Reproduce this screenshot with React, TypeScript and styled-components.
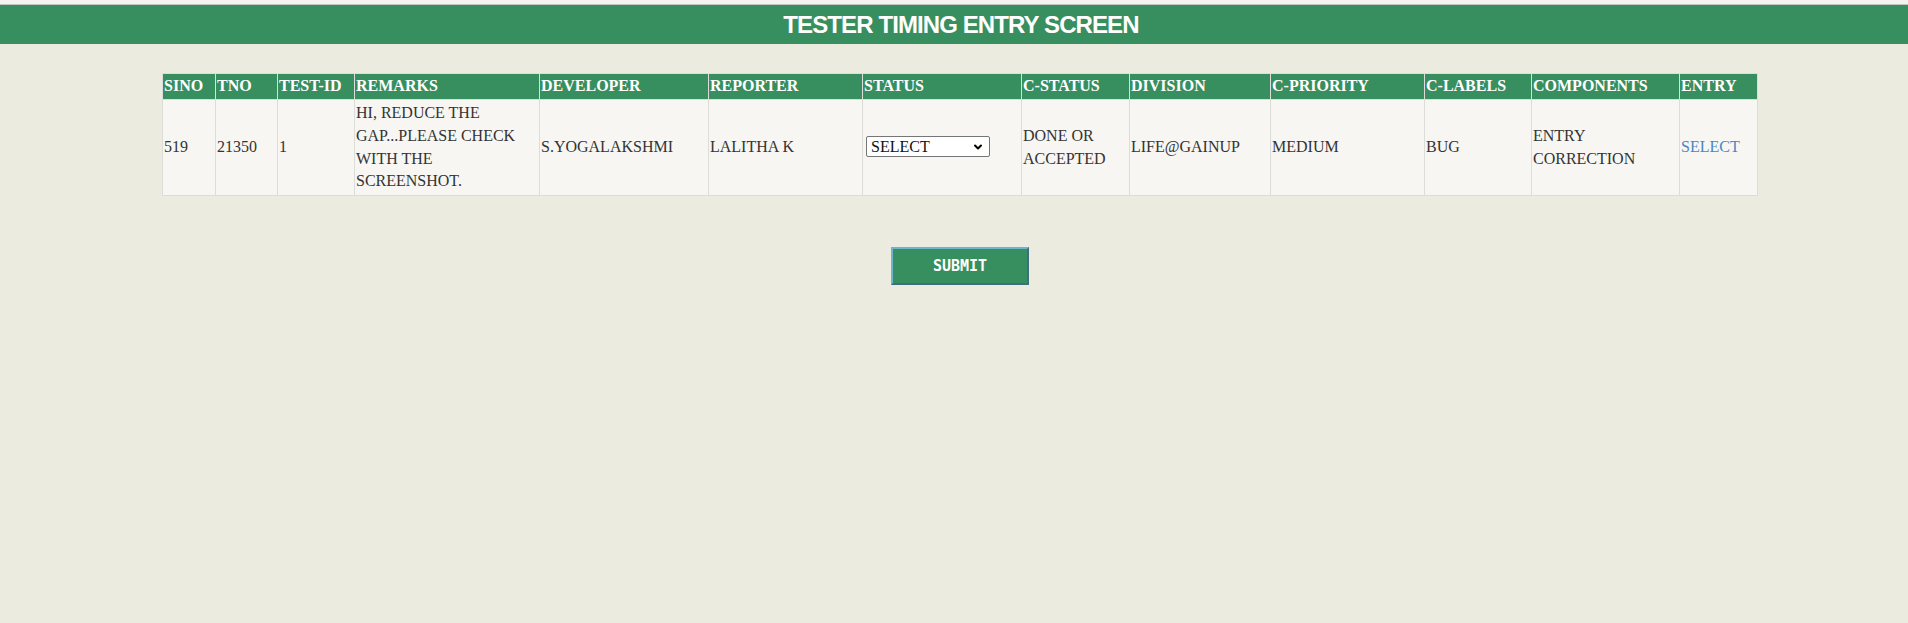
import React from 'react';
import styled, {createGlobalStyle} from 'styled-components';
import {ChevronDown} from 'lucide-react';

const GlobalStyle = createGlobalStyle`
  html,
  body {
    margin: 0;
    padding: 0;
    background: #ebebdf;
  }

  body {
    font-family: 'Liberation Serif', 'Times New Roman', serif;
    color: #333;
  }
`;

const TopEdge = styled.div`
  height: 4px;
  background: #f3f3f0;
  border-bottom: 1px solid #c4c4c4;
`;

const TitleBar = styled.div`
  display: flex;
  justify-content: center;
  align-items: center;
  height: 39px;
  padding-left: 14px;
  background: #378e5e;
`;

const Title = styled.h1`
  margin: 0;
  font-family: 'Liberation Sans', Arial, sans-serif;
  font-size: 24px;
  font-weight: bold;
  letter-spacing: -0.9px;
  color: #fff;
`;

const Content = styled.div`
  display: flex;
  flex-direction: column;
  align-items: center;
  padding: 29px 0 0 12px;
`;

const Table = styled.table`
  width: 1595px;
  table-layout: fixed;
  border-collapse: collapse;
  border: 1px solid #dcdcd8;
`;

const HeadCell = styled.th`
  padding: 1px 1px 2px;
  background: #378e5e;
  border: 1px solid #dcdcd8;
  color: #fff;
  font-size: 16px;
  font-weight: bold;
  line-height: 22px;
  text-align: left;
  white-space: nowrap;
`;

const Cell = styled.td`
  padding: 1px 1px;
  background: #f7f6f2;
  border: 1px solid #dcdcd8;
  font-size: 16px;
  line-height: 22.7px;
  vertical-align: middle;
  color: #333;
`;

const SelectBox = styled.div`
  position: relative;
  display: inline-flex;
  margin-left: 2px;

  svg {
    position: absolute;
    top: 5px;
    right: 6px;
    pointer-events: none;
    color: #000;
  }
`;

const StatusSelect = styled.select`
  appearance: none;
  width: 124px;
  height: 21px;
  padding: 0 20px 0 4px;
  font-family: 'Liberation Serif', 'Times New Roman', serif;
  font-size: 16px;
  color: #111;
  background: #fff;
  border: 1px solid #767676;
  border-radius: 2px;
`;

const EntryLink = styled.a`
  color: #4a86c2;
  text-decoration: none;
  cursor: pointer;
`;

const SubmitButton = styled.button`
  width: 138px;
  height: 38px;
  margin-top: 51px;
  background: #378e5e;
  border-style: solid;
  border-width: 2px;
  border-color: #6db4cc #3e6f7e #3e6f7e #6db4cc;
  color: #fff;
  font-family: 'DejaVu Sans Mono', monospace;
  font-size: 15px;
  font-weight: bold;
  cursor: pointer;
`;

const columns = [
  {label: 'SINO', width: 53},
  {label: 'TNO', width: 62},
  {label: 'TEST-ID', width: 77},
  {label: 'REMARKS', width: 185},
  {label: 'DEVELOPER', width: 169},
  {label: 'REPORTER', width: 154},
  {label: 'STATUS', width: 159},
  {label: 'C-STATUS', width: 108},
  {label: 'DIVISION', width: 141},
  {label: 'C-PRIORITY', width: 154},
  {label: 'C-LABELS', width: 107},
  {label: 'COMPONENTS', width: 148},
  {label: 'ENTRY', width: 78},
];

const rows = [
  {
    sino: '519',
    tno: '21350',
    testId: '1',
    remarks: 'HI, REDUCE THE GAP...PLEASE CHECK WITH THE SCREENSHOT.',
    developer: 'S.YOGALAKSHMI',
    reporter: 'LALITHA K',
    cStatus: 'DONE OR ACCEPTED',
    division: 'LIFE@GAINUP',
    cPriority: 'MEDIUM',
    cLabels: 'BUG',
    components: 'ENTRY CORRECTION',
  },
];

export default function App() {
  return (
    <>
      <GlobalStyle />
      <TopEdge />
      <TitleBar>
        <Title>TESTER TIMING ENTRY SCREEN</Title>
      </TitleBar>
      <Content>
        <Table>
          <colgroup>
            {columns.map(column => (
              <col key={column.label} style={{width: column.width}} />
            ))}
          </colgroup>
          <thead>
            <tr>
              {columns.map(column => (
                <HeadCell key={column.label}>{column.label}</HeadCell>
              ))}
            </tr>
          </thead>
          <tbody>
            {rows.map(row => (
              <tr key={row.sino} style={{height: 96}}>
                <Cell>{row.sino}</Cell>
                <Cell>{row.tno}</Cell>
                <Cell>{row.testId}</Cell>
                <Cell>{row.remarks}</Cell>
                <Cell>{row.developer}</Cell>
                <Cell>{row.reporter}</Cell>
                <Cell>
                  <SelectBox>
                    <StatusSelect defaultValue="">
                      <option value="">SELECT</option>
                      <option value="open">OPEN</option>
                      <option value="done">DONE</option>
                    </StatusSelect>
                    <ChevronDown size={12} strokeWidth={4} />
                  </SelectBox>
                </Cell>
                <Cell>{row.cStatus}</Cell>
                <Cell>{row.division}</Cell>
                <Cell>{row.cPriority}</Cell>
                <Cell>{row.cLabels}</Cell>
                <Cell>{row.components}</Cell>
                <Cell>
                  <EntryLink>SELECT</EntryLink>
                </Cell>
              </tr>
            ))}
          </tbody>
        </Table>
        <SubmitButton type="button">SUBMIT</SubmitButton>
      </Content>
    </>
  );
}
